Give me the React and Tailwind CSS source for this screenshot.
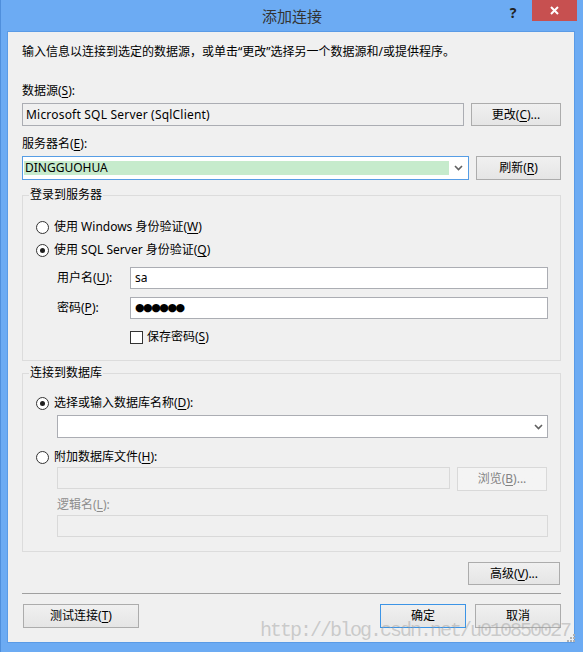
import React from "react";

// 带下划线的访问键
const K = ({ children }) => <span className="underline underline-offset-2">{children}</span>;

function Btn({ children, className = "", primary = false, disabled = false }) {
  return (
    <button
      type="button"
      className={
        "flex items-center justify-center border text-[12px] leading-4 bg-linear-to-b " +
        (disabled
          ? "border-[#d9d9d9] from-[#f4f4f4] to-[#f4f4f4] text-[#838383] "
          : primary
          ? "border-[#3c94e6] from-[#f0f0f0] to-[#e5e5e5] text-black "
          : "border-[#acacac] from-[#f0f0f0] to-[#e5e5e5] text-black ") +
        className
      }
    >
      {children}
    </button>
  );
}

function Radio({ checked }) {
  return (
    <span className="w-[13px] h-[13px] rounded-full border border-[#333333] bg-white flex items-center justify-center shrink-0">
      {checked && <span className="w-[5px] h-[5px] rounded-full bg-[#1f1f1f]" />}
    </span>
  );
}

function Chevron() {
  return (
    <svg width="9" height="6" viewBox="0 0 9 6">
      <path d="M1 1 L4.5 4.5 L8 1" fill="none" stroke="#606060" strokeWidth="1.6" />
    </svg>
  );
}

export default function App() {
  return (
    <div className="w-[583px] h-[652px] bg-[#6cabf3] border-l border-[#4f8fdc] flex flex-col font-['Noto_Sans','Noto_Sans_CJK_SC',sans-serif] text-black relative">
      {/* 标题栏 */}
      <div className="h-[31px] grid grid-cols-[1fr_auto_1fr] shrink-0">
        <div />
        <div className="pt-[6px] text-[15px] leading-5 text-[#333333]">添加连接</div>
        <div className="flex justify-end items-start pr-[6px]">
          <span className="w-[20px] mt-[3px] mr-[9px] text-center text-[14px] font-bold leading-5 text-[#222]">?</span>
          <span className="w-[45px] h-[21px] bg-[#c75050] flex items-center justify-center">
            <svg width="9" height="9" viewBox="0 0 9 9">
              <path d="M1 1 L8 8 M8 1 L1 8" stroke="white" strokeWidth="2" />
            </svg>
          </span>
        </div>
      </div>

      {/* 客户区 */}
      <div className="ml-[6px] mr-[8px] h-[612px] bg-[#f0f0f0] border border-[#5a9be6] pt-[12px] pl-[14px] pr-[13px] text-[12px] leading-4">
        <div>输入信息以连接到选定的数据源，或单击“更改”选择另一个数据源和/或提供程序。</div>

        <div className="mt-[23px]">数据源(<K>S</K>):</div>
        <div className="mt-[4px] flex gap-[7px]">
          <div className="w-[442px] h-[23px] border border-[#abadb3] bg-[#f0f0f0] flex items-center px-[3px] tracking-[0.2px]">
            Microsoft SQL Server (SqlClient)
          </div>
          <Btn className="w-[90px] h-[23px]">
            更改(<K>C</K>)...
          </Btn>
        </div>

        <div className="mt-[10px]">服务器名(<K>E</K>):</div>
        <div className="mt-[4px] flex gap-[7px]">
          <div className="w-[447px] h-[24px] border border-[#569de5] bg-white flex items-center pl-[1px]">
            <div className="w-[425px] h-[14px] bg-[#c6ebcc] flex items-center pl-[1px]">DINGGUOHUA</div>
            <div className="flex-1 flex justify-center">
              <Chevron />
            </div>
          </div>
          <Btn className="w-[85px] h-[24px]">
            刷新(<K>R</K>)
          </Btn>
        </div>

        {/* 登录到服务器 */}
        <fieldset className="mt-[7px] border border-[#dcdcdc] pb-[15px]">
          <legend className="ml-[6px] px-[1px] leading-4">登录到服务器</legend>
          <div className="mt-[16px] pl-[13px] flex items-center gap-[5px] h-4">
            <Radio />
            <span>
              使用 Windows 身份验证(<K>W</K>)
            </span>
          </div>
          <div className="mt-[7px] pl-[13px] flex items-center gap-[5px] h-4">
            <Radio checked />
            <span>
              使用 SQL Server 身份验证(<K>Q</K>)
            </span>
          </div>
          <div className="mt-[9px] pl-[34px] pr-[12px] flex items-center">
            <span className="w-[73px]">
              用户名(<K>U</K>):
            </span>
            <div className="flex-1 h-[22px] border border-[#abadb3] bg-white flex items-center px-[4px]">sa</div>
          </div>
          <div className="mt-[8px] pl-[34px] pr-[12px] flex items-center">
            <span className="w-[73px]">
              密码(<K>P</K>):
            </span>
            <div className="flex-1 h-[22px] border border-[#abadb3] bg-white flex items-center px-[4px] text-[11px] tracking-[-1.5px] font-['DejaVu_Sans',sans-serif]">
              ●●●●●●
            </div>
          </div>
          <div className="mt-[10px] pl-[107px] flex items-center gap-[4px] h-4">
            <span className="w-[13px] h-[13px] border border-[#333333] bg-white shrink-0" />
            <span>
              保存密码(<K>S</K>)
            </span>
          </div>
        </fieldset>

        {/* 连接到数据库 */}
        <fieldset className="mt-[4px] border border-[#dcdcdc] pb-[14px]">
          <legend className="ml-[6px] px-[1px] leading-4">连接到数据库</legend>
          <div className="mt-[14px] pl-[13px] flex items-center gap-[5px] h-4">
            <Radio checked />
            <span>
              选择或输入数据库名称(<K>D</K>):
            </span>
          </div>
          <div className="mt-[4px] ml-[34px] mr-[12px] h-[23px] border border-[#abadb3] bg-white flex items-center justify-end pr-[4px]">
            <Chevron />
          </div>
          <div className="mt-[11px] pl-[13px] flex items-center gap-[5px] h-4">
            <Radio />
            <span>
              附加数据库文件(<K>H</K>):
            </span>
          </div>
          <div className="mt-[2px] pl-[34px] pr-[13px] flex gap-[7px] items-start">
            <div className="w-[393px] h-[22px] border border-[#d9d9d9] bg-[#f0f0f0]" />
            <Btn disabled className="w-[90px] h-[24px]">
              浏览(<K>B</K>)...
            </Btn>
          </div>
          <div className="mt-[6px] pl-[34px] text-[#8d8d8d]">
            逻辑名(<K>L</K>):
          </div>
          <div className="mt-[2px] ml-[34px] mr-[12px] h-[22px] border border-[#d9d9d9] bg-[#f0f0f0]" />
        </fieldset>

        <div className="mt-[10px] flex justify-end pr-[1px]">
          <Btn className="w-[92px] h-[23px]">
            高级(<K>V</K>)...
          </Btn>
        </div>

        <div className="mt-[8px] h-px bg-[#a0a0a0]" />

        <div className="mt-[10px] flex items-center">
          <Btn className="w-[116px] h-[24px] ml-[1px]">
            测试连接(<K>T</K>)
          </Btn>
          <div className="flex-1" />
          <Btn primary className="w-[86px] h-[24px]">
            确定
          </Btn>
          <Btn className="w-[86px] h-[24px] ml-[9px]">取消</Btn>
        </div>
      </div>

      {/* 水印 */}
      <div className="absolute left-[259px] top-[621px] text-[20px] leading-5 tracking-[-2px] font-['Liberation_Mono',monospace] text-[#9a9a9a]/45 pointer-events-none">
        http://blog.csdn.net/u010850027
      </div>

      {/* 尺寸调整手柄 */}
      <svg className="absolute left-[565px] top-[633px]" width="10" height="10" viewBox="0 0 10 10">
        <g fill="#b0b0b0">
          <rect x="7" y="1" width="2" height="2" />
          <rect x="4" y="4" width="2" height="2" />
          <rect x="7" y="4" width="2" height="2" />
          <rect x="1" y="7" width="2" height="2" />
          <rect x="4" y="7" width="2" height="2" />
          <rect x="7" y="7" width="2" height="2" />
        </g>
      </svg>
    </div>
  );
}
